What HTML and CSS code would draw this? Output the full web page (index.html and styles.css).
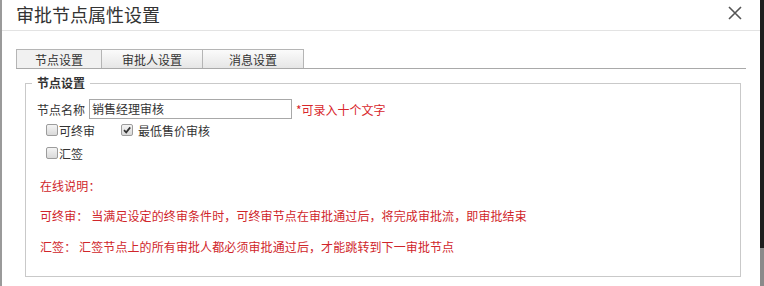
FILE: index.html
```html
<!DOCTYPE html>
<html lang="zh-CN">
<head>
<meta charset="utf-8">
<title>审批节点属性设置</title>
<link rel="stylesheet" href="styles.css">
</head>
<body>
<div class="frame">
  <div class="dialog">
    <div class="header">
      <h1 class="title">审批节点属性设置</h1>
      <span class="close" aria-label="关闭">
        <svg width="14" height="14" viewBox="0 0 14 14"><path d="M1 1 L13 13 M13 1 L1 13" stroke="#555" stroke-width="1.6" fill="none"/></svg>
      </span>
    </div>
    <div class="body">
      <div class="tabs">
        <div class="tab active">节点设置</div>
        <div class="tab">审批人设置</div>
        <div class="tab">消息设置</div>
      </div>
      <fieldset class="group">
        <legend class="legend">节点设置</legend>
        <div class="row name-row">
          <span class="label">节点名称</span>
          <span class="input">销售经理审核</span>
          <span class="hint">*可录入十个文字</span>
        </div>
        <div class="row check-row first">
          <span class="check"><span class="box"></span>可终审</span>
          <span class="check second"><span class="box checked"><svg width="10" height="10" viewBox="0 0 10 10"><path d="M2 5.2 L4.2 7.4 L8.2 2.4" stroke="#333" stroke-width="1.7" fill="none"/></svg></span>最低售价审核</span>
        </div>
        <div class="row check-row">
          <span class="check"><span class="box"></span>汇签</span>
        </div>
        <p class="note n1">在线说明：</p>
        <p class="note n2">可终审：&nbsp;当满足设定的终审条件时，可终审节点在审批通过后，将完成审批流，即审批结束</p>
        <p class="note n3">汇签：&nbsp;汇签节点上的所有审批人都必须审批通过后，才能跳转到下一审批节点</p>
      </fieldset>
    </div>
  </div>
  <div class="edge"></div>
</div>
</body>
</html>
```

FILE: styles.css
```css
html, body {
  margin: 0;
  padding: 0;
  background: #fff;
}
body {
  width: 764px;
  height: 286px;
  overflow: hidden;
  font-family: "Noto Sans CJK SC", "Microsoft YaHei", sans-serif;
  font-size: 12px;
  color: #333;
}
.frame {
  display: flex;
  height: 286px;
}
.dialog {
  flex: 1;
  border-left: 2px solid #9a9a9a;
  min-width: 0;
}
.edge {
  width: 4px;
  background: linear-gradient(#1e1e1e 0, #1e1e1e 248px, #8a8a8a 248px, #8a8a8a 100%);
}
.header {
  height: 30px;
  border-bottom: 1px solid #e3e3e3;
  display: flex;
  align-items: center;
  justify-content: space-between;
  padding: 0 18px 0 14px;
}
.title {
  margin: 0;
  font-size: 18px;
  font-weight: normal;
  color: #333;
  line-height: 24px;
  margin-top: -2px;
}
.close {
  display: flex;
  width: 14px;
  height: 14px;
  margin-top: -4px;
}
.body {
  padding: 18px 14px 0 14px;
}
.tabs {
  display: flex;
  border-bottom: 1px solid #a9a9a9;
  height: 19px;
}
.tab {
  width: 101px;
  height: 19px;
  box-sizing: border-box;
  border: 1px solid #b5b5b5;
  border-bottom: none;
  border-left: none;
  background: linear-gradient(#fbfbfb, #e6e6e6);
  text-align: center;
  line-height: 19px;
  color: #333;
}
.tab.active {
  width: 86px;
  border-left: 1px solid #b5b5b5;
  background: #f1f1f1;
}
.group {
  margin: 7px 5px 0 9px;
  padding: 0 0 19px 0;
  border: 1px solid #c9c9c9;
  min-width: 0;
}
.legend {
  margin-left: 6px;
  padding: 0 5px;
  font-weight: bold;
  line-height: 14px;
  color: #333;
}
.row {
  display: flex;
  align-items: center;
  height: 20px;
  padding-left: 11px;
}
.name-row {
  margin-top: 9px;
}
.label {
  margin-right: 4px;
}
.input {
  box-sizing: border-box;
  width: 203px;
  height: 20px;
  border: 1px solid #a8a8a8;
  padding-left: 2px;
  line-height: 18px;
  color: #333;
}
.hint {
  margin-left: 4px;
  color: #d8262b;
}
.check-row {
  margin-top: 3px;
  padding-left: 20px;
}
.check-row.first {
  margin-top: 1px;
}
.check {
  display: flex;
  align-items: center;
}
.check.second {
  margin-left: 26px;
}
.box {
  box-sizing: border-box;
  width: 12px;
  height: 12px;
  border: 1px solid #9c9c9c;
  border-radius: 2px;
  background: linear-gradient(#f4f4f4, #d9d9d9);
  margin-right: 1px;
  display: flex;
  align-items: center;
  justify-content: center;
}
.box.checked {
  margin-right: 5px;
}
.note {
  margin: 0;
  padding-left: 14px;
  line-height: 20px;
  color: #d0262b;
  letter-spacing: 0.1px;
}
.n1 {
  margin-top: 13px;
}
.n2 {
  margin-top: 10px;
}
.n3 {
  margin-top: 11px;
}
```
